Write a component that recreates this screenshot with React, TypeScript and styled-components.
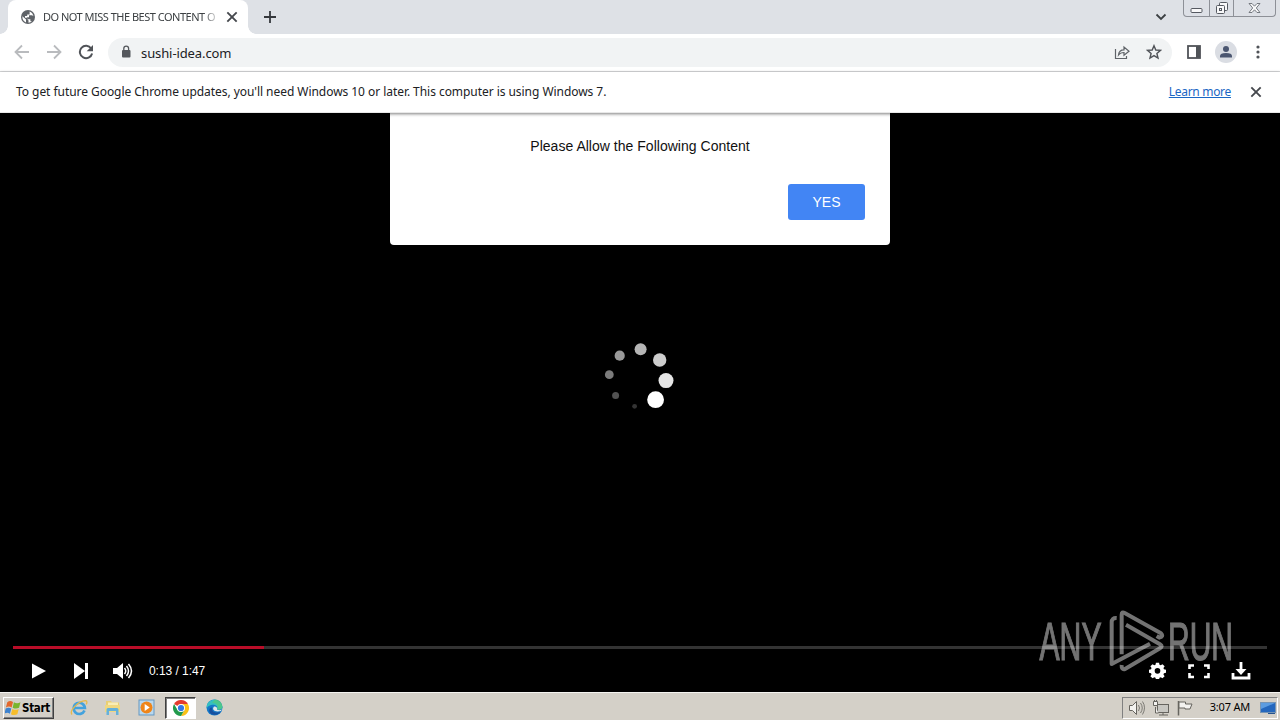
import React from 'react';
import styled, { createGlobalStyle } from 'styled-components';

const GlobalStyle = createGlobalStyle`
  * {
    box-sizing: border-box;
  }
  body {
    margin: 0;
    overflow: hidden;
    background: #000;
  }
  button {
    border: 0;
    padding: 0;
    background: none;
    font: inherit;
  }
`;

const uiFont = `'Noto Sans', 'DejaVu Sans', sans-serif`;

const Screen = styled.div`
  position: relative;
  display: flex;
  flex-direction: column;
  width: 1280px;
  height: 720px;
  font-family: ${uiFont};
  color: #202124;
`;

const Svg = styled.svg`
  display: block;
  flex: none;
`;

// Browser chrome
const TabStrip = styled.div`
  display: flex;
  height: 34px;
  background: #dee1e6;
`;
const Tab = styled.div`
  position: relative;
  display: flex;
  align-items: center;
  width: 240px;
  height: 34px;
  margin-left: 8px;
  padding: 0 9px 0 12px;
  background: #fff;
  border-radius: 8px 8px 0 0;

  &::before,
  &::after {
    content: '';
    position: absolute;
    bottom: 0;
    width: 8px;
    height: 8px;
  }
  &::before {
    left: -8px;
    background: radial-gradient(circle at 0 0, transparent 7.5px, #fff 8px);
  }
  &::after {
    right: -8px;
    background: radial-gradient(circle at 100% 0, transparent 7.5px, #fff 8px);
  }
`;
const TabTitle = styled.div`
  width: 177px;
  margin: 0 5px 0 7px;
  overflow: hidden;
  white-space: nowrap;
  font-size: 11px;
  line-height: 16px;
  letter-spacing: -0.5px;
  color: #3c4043;
  mask-image: linear-gradient(to right, #000 160px, transparent 177px);
`;
const NewTab = styled.button`
  display: flex;
  align-items: center;
  margin-left: 14px;
`;
const StripEnd = styled.div`
  display: flex;
  margin-left: auto;
  padding-right: 4px;
`;
const TabSearch = styled.button`
  display: flex;
  align-items: center;
  margin-right: 16px;
`;
const WindowButtons = styled.div`
  display: flex;
  width: 93px;
  height: 17px;
  border: 1px solid #8d9097;
  border-top: 0;
  border-radius: 0 0 4px 4px;
  background: #dde0e6;
`;
const WindowButton = styled.button<{ $width: number }>`
  display: flex;
  align-items: center;
  justify-content: center;
  width: ${(p) => p.$width}px;
  height: 16px;

  & + & {
    border-left: 1px solid #8d9097;
  }
`;

const Toolbar = styled.div`
  display: flex;
  align-items: center;
  height: 38px;
  padding: 0 14px 1px;
  background: #fff;
  border-bottom: 1px solid #d9dadc;
`;
const NavButtons = styled.div`
  display: flex;
  gap: 16px;
`;
const AddressBar = styled.div`
  display: flex;
  align-items: center;
  width: 1064px;
  height: 29px;
  margin-left: 14px;
  padding: 0 10px 0 12px;
  border-radius: 15px;
  background: #f1f3f4;
`;
const Url = styled.div`
  flex: 1;
  margin-left: 9px;
  padding-top: 1px;
  font-size: 13px;
  line-height: 20px;
  letter-spacing: -0.1px;
`;
const ToolbarEnd = styled.div`
  display: flex;
  align-items: center;
  gap: 13px;
  margin-left: 14px;
`;
const Avatar = styled.div`
  display: flex;
  align-items: center;
  justify-content: center;
  width: 22px;
  height: 22px;
  margin-right: -1px;
  border-radius: 50%;
  background: #dadde3;
`;

const InfoBar = styled.div`
  position: relative;
  z-index: 2;
  display: flex;
  align-items: center;
  height: 41px;
  padding: 0 17px 0 16px;
  background: #fff;
  box-shadow: 0 1px 3px rgba(0, 0, 0, 0.5);
  border-bottom: 1px solid #e8e8e8;
  font-size: 12px;
`;
const InfoText = styled.div`
  flex: 1;
  padding-bottom: 2px;
  letter-spacing: -0.05px;
`;
const LearnMore = styled.a`
  margin-right: 18px;
  padding-bottom: 2px;
  letter-spacing: -0.3px;
  color: #1a66c4;
  text-decoration: underline;
`;

// Page
const Page = styled.main`
  position: relative;
  display: flex;
  flex-direction: column;
  height: 579px;
  background: #000;
`;
const Modal = styled.div`
  position: absolute;
  top: 0;
  left: 390px;
  display: flex;
  flex-direction: column;
  width: 500px;
  height: 132px;
  padding: 24px 25px 25px;
  border-radius: 0 0 4px 4px;
  background: #fff;
  font-family: 'Liberation Sans', Arial, sans-serif;
`;
const ModalText = styled.p`
  margin: 0 0 29px;
  text-align: center;
  font-size: 14px;
  line-height: 18px;
  letter-spacing: 0.02px;
  color: #111;
`;
const YesButton = styled.button`
  align-self: flex-end;
  width: 77px;
  height: 36px;
  border-radius: 3px;
  background: #4285f4;
  color: #fff;
  font-size: 14px;
`;
const Stage = styled.div`
  display: flex;
  flex: 1;
  justify-content: center;
  padding: 227px 2px 0 0;
`;
const Track = styled.div`
  height: 3px;
  margin: 0 13px;
  background: #333;
`;
const Played = styled.div`
  width: 251px;
  height: 3px;
  background: #b90d28;
`;
const Controls = styled.div`
  display: flex;
  align-items: center;
  height: 43px;
  padding: 0 29px 0 28px;
  color: #fff;
`;
const Time = styled.div`
  margin-left: 15px;
  padding-top: 1px;
  font: 12px 'Liberation Sans', Arial, sans-serif;
  letter-spacing: -0.05px;
`;
const ControlsEnd = styled.div`
  display: flex;
  align-items: center;
  gap: 21px;
  margin-left: auto;
`;
const ControlButton = styled.button<{ $gap?: number }>`
  display: flex;
  margin-right: ${(p) => p.$gap ?? 0}px;
`;
const Watermark = styled.div`
  position: absolute;
  top: 606px;
  left: 1036px;
  z-index: 3;
`;

// Windows taskbar
const Taskbar = styled.footer`
  display: flex;
  align-items: center;
  height: 28px;
  padding: 2px 2px 0 3px;
  background: #d4d0c8;
  border-top: 1px solid #f4f3f0;
`;
const StartButton = styled.button`
  display: flex;
  align-items: center;
  gap: 1px;
  width: 51px;
  height: 22px;
  padding-left: 1px;
  border: 1px solid;
  border-color: #fff #404040 #404040 #fff;
  box-shadow: inset -1px -1px #808080;
  font: bold 11.5px 'DejaVu Sans Condensed', 'DejaVu Sans', sans-serif;
  letter-spacing: -0.3px;
  color: #000;
`;
const QuickLaunch = styled.div`
  display: flex;
  margin-left: 9px;
`;
const Launcher = styled.button<{ $active?: boolean }>`
  display: flex;
  align-items: center;
  justify-content: center;
  width: 31px;
  height: 22px;
  margin-right: 3px;
  background: ${(p) => (p.$active ? '#fff' : 'transparent')};
  border: 1px solid transparent;
  ${(p) =>
    p.$active &&
    'border-color: #404040 #fff #fff #404040; box-shadow: inset 1px 1px #808080;'}
`;
const Tray = styled.div`
  display: flex;
  align-items: center;
  width: 156px;
  height: 22px;
  margin-left: auto;
  padding: 0 1px 0 5px;
  border: 1px solid;
  border-color: #808080 #fff #fff #808080;
`;
const Clock = styled.div`
  margin: 0 10px 2px auto;
  font-size: 11px;
  letter-spacing: -0.2px;
  color: #000;
`;

const dots = [
  { x: 40.6, y: 9.3, r: 6, fill: '#b5b5b5' },
  { x: 59.7, y: 20, r: 6.7, fill: '#cdcdcd' },
  { x: 66, y: 40.6, r: 7.5, fill: '#e5e5e5' },
  { x: 55.6, y: 59.7, r: 8.4, fill: '#fff' },
  { x: 34.6, y: 66.3, r: 2.4, fill: '#343434' },
  { x: 15.6, y: 55.6, r: 3.5, fill: '#525252' },
  { x: 9.3, y: 34.7, r: 4.4, fill: '#7c7c7c' },
  { x: 19.7, y: 15.7, r: 5.1, fill: '#999' },
];

const Spinner = () => (
  <Svg width="78" height="78" viewBox="0 0 78 78">
    {dots.map((dot) => (
      <circle key={dot.r} cx={dot.x} cy={dot.y} r={dot.r} fill={dot.fill} />
    ))}
  </Svg>
);

const GlobeIcon = () => (
  <Svg width="16" height="16" viewBox="0 0 16 16">
    <circle cx="8" cy="8" r="7" fill="#5f6368" />
    <path
      d="M2.4 7.3L6 10.6v2.8C3.8 12.6 2.1 10.4 2.4 7.3zM9.6 2.6c2 .8 3.600 2.500 3.800 4.700-.5-.8-1.300-1.200-2.300-1H9v2H7v2h3.400v2h1.400c-1 1-2 1.400-3.300 1.500v-2.200L7.200 10V8.800H5V7h2.200V5.500h2.400z"
      fill="#fff"
    />
  </Svg>
);

const CloseIcon = ({ size = 12 }: { size?: number }) => (
  <Svg width={size} height={size} viewBox="0 0 12 12">
    <path d="M2 2l8 8M10 2l-8 8" stroke="#45484d" strokeWidth="1.6" />
  </Svg>
);

const ArrowIcon = ({ flip }: { flip?: boolean }) => (
  <Svg width="16" height="16" viewBox="0 0 16 16">
    <path
      d="M15 8H2M8 1.5L1.5 8 8 14.5"
      transform={flip ? 'rotate(180 8 8)' : undefined}
      fill="none"
      stroke="#b9bbbe"
      strokeWidth="1.8"
    />
  </Svg>
);

const ReloadIcon = () => (
  <Svg width="16" height="16" viewBox="0 0 16 16">
    <path
      d="M13.2 4.5A6.2 6.2 0 1 0 14.1 9.5"
      fill="none"
      stroke="#505358"
      strokeWidth="2"
    />
    <path d="M15 1v6.300H8.700z" fill="#505358" />
  </Svg>
);

const LockIcon = () => (
  <Svg width="12" height="14" viewBox="0 0 12 14">
    <rect x="2" y="5" width="8.5" height="7.5" rx="1" fill="#55585d" />
    <path
      d="M3.8 5.5V3.6a2.4 2.4 0 0 1 4.8 0v1.9"
      fill="none"
      stroke="#55585d"
      strokeWidth="1.3"
    />
  </Svg>
);

const ShareIcon = () => (
  <Svg width="16" height="16" viewBox="0 0 16 16">
    <path
      d="M1.5 5v9.5h11V12M4.5 11c.3-3.5 2.5-5.200 5.500-5.200V3l5 4.200-5 4V8.500c-2.500 0-4.200.7-5.500 2.500z"
      fill="none"
      stroke="#5f6368"
      strokeWidth="1.2"
    />
  </Svg>
);

const StarIcon = () => (
  <Svg width="16" height="16" viewBox="0 0 16 16">
    <path
      d="M8 1.700l1.800 4.300 4.700.4-3.600 3.100 1.100 4.600L8 11.600l-4 2.500 1.100-4.600L1.500 6.400 6.200 6z"
      fill="none"
      stroke="#505358"
      strokeWidth="1.4"
    />
  </Svg>
);

const GearIcon = () => (
  <Svg width="17" height="17" viewBox="0 0 24 24">
    <path
      fill="#fff"
      fillRule="evenodd"
      d="M9.8 1h4.4l.6 3 1.700.7 2.500-1.700 3.100 3.100-1.700 2.500.7 1.700 2.900.5v4.400l-2.900.6-.7 1.700 1.700 2.500-3.100 3.100-2.500-1.700-1.700.7-.6 2.900H9.800l-.6-2.900-1.700-.7L5 23.100 1.900 20l1.700-2.500-.7-1.700-2.900-.6v-4.400l2.900-.5.7-1.700-1.700-2.500L5 3l2.500 1.700L9.200 4zM12 8.500a4 4 0 1 0 0 8 4 4 0 0 0 0-8z"
    />
  </Svg>
);

const AnyRunLogo = () => (
  <Svg width="210" height="74" viewBox="0 0 210 74" opacity="0.45">
    <g
      fill="#fff"
      stroke="#fff"
      strokeWidth="1.2"
      fontFamily="'Liberation Sans', Arial, sans-serif"
      fontSize="53"
    >
      <text x="3.500" y="53.500" textLength="62" lengthAdjust="spacingAndGlyphs">
        ANY
      </text>
      <text x="132" y="53.500" textLength="65" lengthAdjust="spacingAndGlyphs">
        RUN
      </text>
    </g>
    <g
      transform="translate(64 -2) scale(0.3333)"
      fill="none"
      stroke="#fff"
      strokeWidth="12"
      strokeLinejoin="round"
    >
      <path d="M65 151V32Q65 22 74 27L183 88Q192 98 178 101L170 96" />
      <path d="M78 62L180 121Q190 127 180 133L75 195Q64 198 65 183" />
      <path d="M50 42Q35 41 35 55V180L150 119" />
    </g>
  </Svg>
);

const StartFlag = () => (
  <Svg width="16" height="16" viewBox="1 1 14 14">
    <path d="M3 3Q5.5 1 8 2.8L6.8 7.5Q4.5 6 1.8 7.5z" fill="#e3672b" />
    <path d="M8.8 3Q11.5 4.8 14.5 3L13.3 7.8Q10.5 9.3 7.7 7.7z" fill="#79b52d" />
    <path d="M1.6 8.5Q4 6.9 6.5 8.5L5.3 13Q3 11.5.4 13z" fill="#3c82cf" />
    <path d="M7.4 8.8Q10.3 10.4 13 8.8L11.8 13.5Q9 15 6.2 13.4z" fill="#f6bd2b" />
  </Svg>
);

const IeIcon = () => (
  <Svg width="18" height="18" viewBox="0 0 18 18">
    <path
      d="M14.5 11.5A5.6 5.6 0 1 1 14.9 9H5"
      fill="none"
      stroke="#43a2dd"
      strokeWidth="2.7"
    />
    <path
      d="M2 15.500C-1 12 8 2 15.500 1.700c2 .2 1.500 2.300.7 3.600"
      fill="none"
      stroke="#e6b94a"
      strokeWidth="1.3"
    />
  </Svg>
);

const FolderIcon = () => (
  <Svg width="17" height="17" viewBox="0 0 17 17">
    <path d="M2 2h5l1 1.500h7V13H2z" fill="#e9cf73" />
    <path d="M4 3.500h10V8H4z" fill="#f9edb5" />
    <path d="M1 6h15v7H1z" fill="#f0d880" />
    <path d="M2.500 16V10.500q0-1.500 1.500-1.500h9q1.500 0 1.500 1.500V16H12v-4H5v4z" fill="#65b1da" />
  </Svg>
);

const MediaIcon = () => (
  <Svg width="17" height="17" viewBox="0 0 17 17">
    <rect x="1" y="1" width="15" height="15" fill="#b9d8ee" stroke="#6597c1" />
    <circle cx="8.5" cy="8.5" r="6" fill="#ef8519" />
    <path d="M6.700 5l5 3.500-5 3.500z" fill="#fff" />
  </Svg>
);

const ChromeIcon = () => (
  <Svg width="16" height="16" viewBox="0 0 16 16">
    <path d="M8 8L1.070 4A8 8 0 0 1 14.930 4z" fill="#e33b2e" />
    <path d="M8 8V4h6.930A8 8 0 0 1 8 16l3.500-6z" fill="#fbc116" />
    <path d="M1.070 4L4.540 10 11.460 10 8 16A8 8 0 0 1 1.070 4z" fill="#229a4c" />
    <circle cx="8" cy="8" r="4" fill="#fff" />
    <circle cx="8" cy="8" r="3.1" fill="#3478e4" />
  </Svg>
);

const EdgeIcon = () => (
  <Svg width="17" height="17" viewBox="0 0 17 17">
    <circle cx="8.5" cy="8.5" r="8" fill="#1478c8" />
    <path
      d="M.7 7C2-1 14-2 16.400 7.500c.3 3-3.400 4-5.400 2.800 1.300-2.300-.8-4.500-3.500-4.500C4 5.800 1 7.500.7 10z"
      fill="#35bfc1"
    />
    <path
      d="M9 .5c4 .2 7 3 7.400 7 .2 3-3.400 4-5.400 2.800C13 6 10 4 6 3.800z"
      fill="#57cb72"
      opacity="0.65"
    />
    <path
      d="M6 8.500c-.6 4 3 6 8.500 4.500C12 17 3.500 17 3.200 11.500 3.200 9.500 4.500 8 6 8.500z"
      fill="#174f9e"
    />
    <path
      d="M8 7.500c-2.500 3 .5 6 6.800 4.500l1.200-1.500c-2.500 1.200-5 .5-5-.3.600-1-.5-3-3-2.700z"
      fill="#e0e7e9"
    />
  </Svg>
);

const TrayIcons = () => (
  <Svg width="66" height="18" viewBox="0 0 66 18">
    <g fill="#f3f2ef" stroke="#66645f">
      <path d="M1.500 6.500h3l4-4v13l-4-4h-3z" />
      <path
        d="M10.500 6q2 3 0 6M12.500 4q3.500 5 0 10M14.500 2.500q4 6 0 13"
        fill="none"
        strokeWidth=".8"
      />
      <rect x="29.5" y="5.5" width="11" height="8" fill="#c8c7c2" />
      <path d="M31 16h9M35 14v2M27.500 8v6h3" />
      <path d="M25.500 2.500h4v4h-4zM26.500 1v2M28.500 1v2" />
      <path d="M50.500 2v14.500" strokeWidth="1.5" />
      <path d="M51 3h6.500v2h6.500l-2 5h-5V9h-6z" />
    </g>
  </Svg>
);

const App: React.FC = () => (
  <Screen>
    <GlobalStyle />
    <TabStrip>
      <Tab>
        <GlobeIcon />
        <TabTitle>DO NOT MISS THE BEST CONTENT O</TabTitle>
        <CloseIcon size={14} />
      </Tab>
      <NewTab>
        <Svg width="16" height="16" viewBox="0 0 16 16">
          <path d="M8 2v12M2 8h12" stroke="#35383c" strokeWidth="1.8" />
        </Svg>
      </NewTab>
      <StripEnd>
        <TabSearch>
          <Svg width="12" height="12" viewBox="0 0 12 12">
            <path d="M1.5 3.5L6 8l4.5-4.5" fill="none" stroke="#3c4043" strokeWidth="1.8" />
          </Svg>
        </TabSearch>
        <WindowButtons>
          <WindowButton $width={25}>
            <Svg width="13" height="16" viewBox="0 0 13 16">
              <rect x="1" y="8.5" width="11" height="4" rx="1" fill="#f8f8f9" stroke="#555961" />
            </Svg>
          </WindowButton>
          <WindowButton $width={25}>
            <Svg width="14" height="16" viewBox="0 0 14 16">
              <g fill="#f8f8f9" stroke="#555961">
                <rect x="4.5" y="2.5" width="8" height="8" rx="1" />
                <rect x="1.5" y="5.5" width="8" height="8" rx="1" />
                <rect x="4.5" y="8.5" width="2" height="2" />
              </g>
            </Svg>
          </WindowButton>
          <WindowButton $width={42}>
            <Svg width="13" height="16" viewBox="0 0 13 16">
              <path
                d="M1 3.500h3l2.500 2.700L9 3.500h3L8.300 8l3.700 4.500H9L6.500 9.800 4 12.500H1L4.700 8z"
                fill="#f8f8f9"
                stroke="#6a6e75"
                strokeWidth=".9"
              />
            </Svg>
          </WindowButton>
        </WindowButtons>
      </StripEnd>
    </TabStrip>
    <Toolbar>
      <NavButtons>
        <ArrowIcon />
        <ArrowIcon flip />
        <ReloadIcon />
      </NavButtons>
      <AddressBar>
        <LockIcon />
        <Url>sushi-idea.com</Url>
        <ControlButton $gap={16}>
          <ShareIcon />
        </ControlButton>
        <StarIcon />
      </AddressBar>
      <ToolbarEnd>
        <Svg width="16" height="16" viewBox="0 0 16 16">
          <rect x="2" y="2" width="12" height="12" fill="#fff" stroke="#505358" strokeWidth="1.8" />
          <path d="M10 2h4v12h-4z" fill="#505358" />
        </Svg>
        <Avatar>
          <Svg width="14" height="14" viewBox="0 0 14 14">
            <circle cx="7" cy="4" r="3" fill="#4b5670" />
            <path d="M1 12.500V11q0-3 6-3t6 3v1.500z" fill="#4b5670" />
          </Svg>
        </Avatar>
        <Svg width="16" height="16" viewBox="0 0 16 16">
          <g fill="#505358">
            <circle cx="9" cy="3" r="1.6" />
            <circle cx="9" cy="8" r="1.6" />
            <circle cx="9" cy="13" r="1.6" />
          </g>
        </Svg>
      </ToolbarEnd>
    </Toolbar>
    <InfoBar>
      <InfoText>
        To get future Google Chrome updates, you'll need Windows 10 or later. This computer is using
        Windows 7.
      </InfoText>
      <LearnMore>Learn more</LearnMore>
      <CloseIcon size={14} />
    </InfoBar>
    <Page>
      <Stage>
        <Spinner />
      </Stage>
      <Modal>
        <ModalText>Please Allow the Following Content</ModalText>
        <YesButton>YES</YesButton>
      </Modal>
      <Track>
        <Played />
      </Track>
      <Controls>
        <ControlButton $gap={24}>
          <Svg width="18" height="18" viewBox="0 0 18 18">
            <path d="M4 1.500L18 9 4 16.500z" fill="#fff" />
          </Svg>
        </ControlButton>
        <ControlButton $gap={24}>
          <Svg width="18" height="18" viewBox="0 0 18 18">
            <path d="M4 1l11 8-11 8zM15 1h3v16h-3z" fill="#fff" />
          </Svg>
        </ControlButton>
        <ControlButton>
          <Svg width="22" height="18" viewBox="0 0 22 18">
            <path d="M1 6h4l6-5v16l-6-5H1z" fill="#fff" />
            <path
              d="M12.5 6q2.500 3 0 6M14.500 4q4 5 0 10M16.500 2q6 7 0 14"
              fill="none"
              stroke="#fff"
              strokeWidth="1.5"
            />
          </Svg>
        </ControlButton>
        <Time>0:13 / 1:47</Time>
        <ControlsEnd>
          <ControlButton $gap={1}>
            <GearIcon />
          </ControlButton>
          <ControlButton>
            <Svg width="22" height="18" viewBox="0 0 22 18">
              <path
                d="M1.5 7V3.5H6M16 3.5h4.500V7M20.500 11v4H16M6 15H1.500v-4"
                fill="none"
                stroke="#fff"
                strokeWidth="2.6"
              />
            </Svg>
          </ControlButton>
          <ControlButton>
            <Svg width="20" height="18" viewBox="0 0 20 18">
              <path d="M10 0v9M2 11v5h16v-5" fill="none" stroke="#fff" strokeWidth="2.8" />
              <path d="M4.500 7h11L10 13z" fill="#fff" />
            </Svg>
          </ControlButton>
        </ControlsEnd>
      </Controls>
    </Page>
    <Taskbar>
      <StartButton>
        <StartFlag />
        Start
      </StartButton>
      <QuickLaunch>
        <Launcher>
          <IeIcon />
        </Launcher>
        <Launcher>
          <FolderIcon />
        </Launcher>
        <Launcher>
          <MediaIcon />
        </Launcher>
        <Launcher $active>
          <ChromeIcon />
        </Launcher>
        <Launcher>
          <EdgeIcon />
        </Launcher>
      </QuickLaunch>
      <Tray>
        <TrayIcons />
        <Clock>3:07 AM</Clock>
        <Svg width="16" height="16" viewBox="0 0 16 16">
          <rect x=".5" y="2.5" width="15" height="10" fill="#2467bd" stroke="#7695b5" />
          <path d="M1 3h14L1 9z" fill="#5c9ce0" />
          <path d="M8 13.500h7" stroke="#24528c" />
        </Svg>
      </Tray>
    </Taskbar>
    <Watermark>
      <AnyRunLogo />
    </Watermark>
  </Screen>
);

export default App;
